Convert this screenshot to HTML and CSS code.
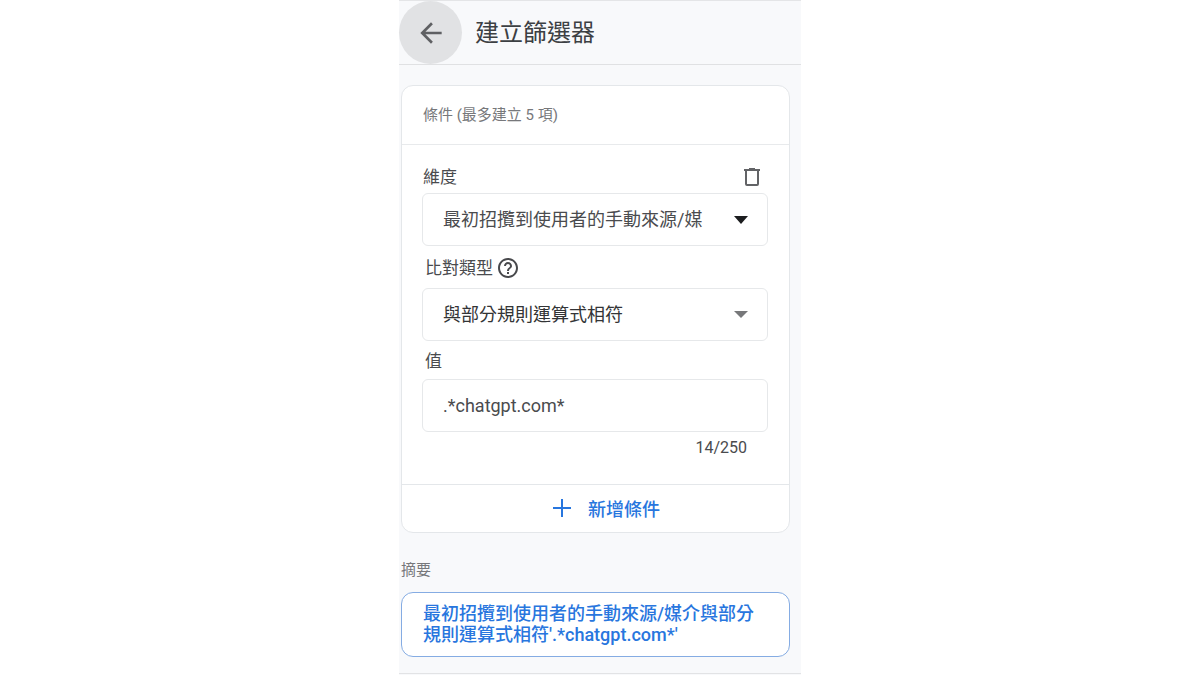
FILE: index.html
```
<!DOCTYPE html>
<html lang="zh-Hant">
<head>
    <meta charset="UTF-8">
    <meta name="viewport" content="width=device-width, initial-scale=1">
    <title>建立篩選器</title>
    <link rel="stylesheet" href="styles.css">
</head>
<body>
    <div class="panel">
        <header class="topbar">
            <button class="back-btn" type="button" aria-label="返回">
                <svg width="32" height="32" viewBox="0 0 24 24"><path d="M20 11H7.83l5.59-5.59L12 4l-8 8 8 8 1.41-1.41L7.83 13H20z"/></svg>
            </button>
            <h1>建立篩選器</h1>
        </header>

        <main class="content">
            <form class="card">
                <h2 class="card-title">條件 (最多建立 5 項)</h2>

                <div class="condition">
                    <div class="label-row first">
                        <label for="dimension">維度</label>
                        <button class="delete-btn" type="button" aria-label="刪除">
                            <svg width="18" height="20" viewBox="0 0 18 20"><path d="M6 1h6v1h5v2H1V2h5z"/><path class="outline" d="M3 3v14q0 1 1 1h10q1 0 1-1V3"/></svg>
                        </button>
                    </div>
                    <div class="select-box">
                        <select id="dimension" class="field">
                            <option>最初招攬到使用者的手動來源/媒</option>
                        </select>
                        <svg class="arrow dark" width="14" height="8" viewBox="0 0 14 8"><path d="M0 0h14L7 8z"/></svg>
                    </div>

                    <div class="label-row indent">
                        <label for="matchType">比對類型</label>
                        <svg class="help" width="24" height="24" viewBox="0 0 24 24"><path d="M11 18h2v-2h-2v2zm1-16C6.48 2 2 6.48 2 12s4.48 10 10 10 10-4.48 10-10S17.52 2 12 2zm0 18c-4.41 0-8-3.59-8-8s3.59-8 8-8 8 3.59 8 8-3.59 8-8 8zm0-14c-2.21 0-4 1.79-4 4h2c0-1.1.9-2 2-2s2 .9 2 2c0 2-3 1.75-3 5h2c0-2.25 3-2.5 3-5 0-2.21-1.79-4-4-4z"/></svg>
                    </div>
                    <div class="select-box">
                        <select id="matchType" class="field strong">
                            <option>與部分規則運算式相符</option>
                        </select>
                        <svg class="arrow" width="14" height="7" viewBox="0 0 14 7"><path d="M0 0h14L7 7z"/></svg>
                    </div>

                    <div class="label-row indent short">
                        <label for="filterValue">值</label>
                    </div>
                    <input id="filterValue" class="field" type="text" maxlength="250" value=".*chatgpt.com*">
                    <div class="counter">14/250</div>
                </div>

                <button class="add-btn" type="button">
                    <svg width="18" height="18" viewBox="0 0 18 18"><path d="M8 0h2v8h8v2h-8v8H8v-8H0V8h8z"/></svg>
                    新增條件
                </button>
            </form>

            <h2 class="summary-title">摘要</h2>
            <div class="summary">最初招攬到使用者的手動來源/媒介與部分規則運算式相符'.*chatgpt.com*'</div>
        </main>
    </div>
</body>
</html>
```
FILE: styles.css
```
* {
    box-sizing: border-box;
}

body {
    margin: 0;
    background: #fff;
    color: #4a4b4e;
    font-family: Roboto, "Noto Sans CJK TC", sans-serif;
}

h1,
h2 {
    margin: 0;
    font-weight: 400;
}

button {
    padding: 0;
    border: none;
    background: none;
    font-family: inherit;
    cursor: pointer;
}

svg {
    display: block;
    flex: none;
    fill: currentColor;
}

.panel {
    max-width: 402px;
    min-height: 100vh;
    margin: 0 auto;
    background: #f8f9fb;
}

.topbar {
    display: flex;
    align-items: center;
    gap: 13px;
    border-top: 1px solid #e4e5e7;
    border-bottom: 1px solid #e0e1e3;
}

.topbar h1 {
    font-size: 24px;
    line-height: 32px;
    color: #3c4043;
}

.back-btn {
    display: flex;
    align-items: center;
    justify-content: center;
    width: 63px;
    height: 63px;
    border-radius: 50%;
    background: #e1e2e4;
    color: #5f6063;
}

.content {
    padding: 20px 11px 16px 2px;
    border-bottom: 1px solid #e2e3e5;
}

.card {
    border: 1px solid #e4e7ea;
    border-radius: 12px;
    background: #fff;
}

.card-title {
    padding: 19px 21px;
    border-bottom: 1px solid #e8eaec;
    font-size: 15px;
    line-height: 20px;
    color: #77787b;
}

.condition {
    padding: 16px 21px 24px 20px;
}

.label-row {
    display: flex;
    align-items: center;
    gap: 3px;
    height: 42px;
    padding-top: 2px;
    font-size: 17px;
    line-height: 24px;
}

.label-row.first {
    justify-content: space-between;
    height: 32px;
    padding: 0 7px 0 1px;
}

.label-row.indent {
    padding-left: 3px;
}

.label-row.short {
    height: 38px;
}

.delete-btn {
    color: #626366;
}

.delete-btn .outline {
    fill: none;
    stroke: currentColor;
    stroke-width: 2;
}

.help {
    color: #48494c;
}

.select-box {
    position: relative;
}

.field {
    display: block;
    width: 100%;
    height: 53px;
    padding: 0 20px;
    border: 1px solid #e6e8ea;
    border-radius: 6px;
    background: #fff;
    color: #4a4b4e;
    font-family: inherit;
    font-size: 18px;
    appearance: none;
}

.field.strong {
    color: #333436;
}

.arrow {
    position: absolute;
    top: 23px;
    right: 20px;
    color: #77787a;
    pointer-events: none;
}

.arrow.dark {
    color: #1c1d1f;
}

.counter {
    padding: 4px 21px 0 0;
    font-size: 16px;
    line-height: 24px;
    text-align: right;
}

.add-btn {
    display: flex;
    align-items: center;
    justify-content: center;
    gap: 17px;
    width: 100%;
    height: 48px;
    padding: 0 0 2px 22px;
    border-top: 1px solid #e4e7ea;
    color: #2876de;
    font-size: 18px;
    font-weight: 500;
}

.summary-title {
    padding: 27px 0 12px;
    font-size: 15px;
    line-height: 20px;
    color: #77787b;
}

.summary {
    padding: 10px 21px 11px;
    border: 1px solid #85ace3;
    border-radius: 12px;
    background: #fff;
    color: #2876de;
    font-size: 18px;
    font-weight: 500;
    line-height: 21px;
}
```
